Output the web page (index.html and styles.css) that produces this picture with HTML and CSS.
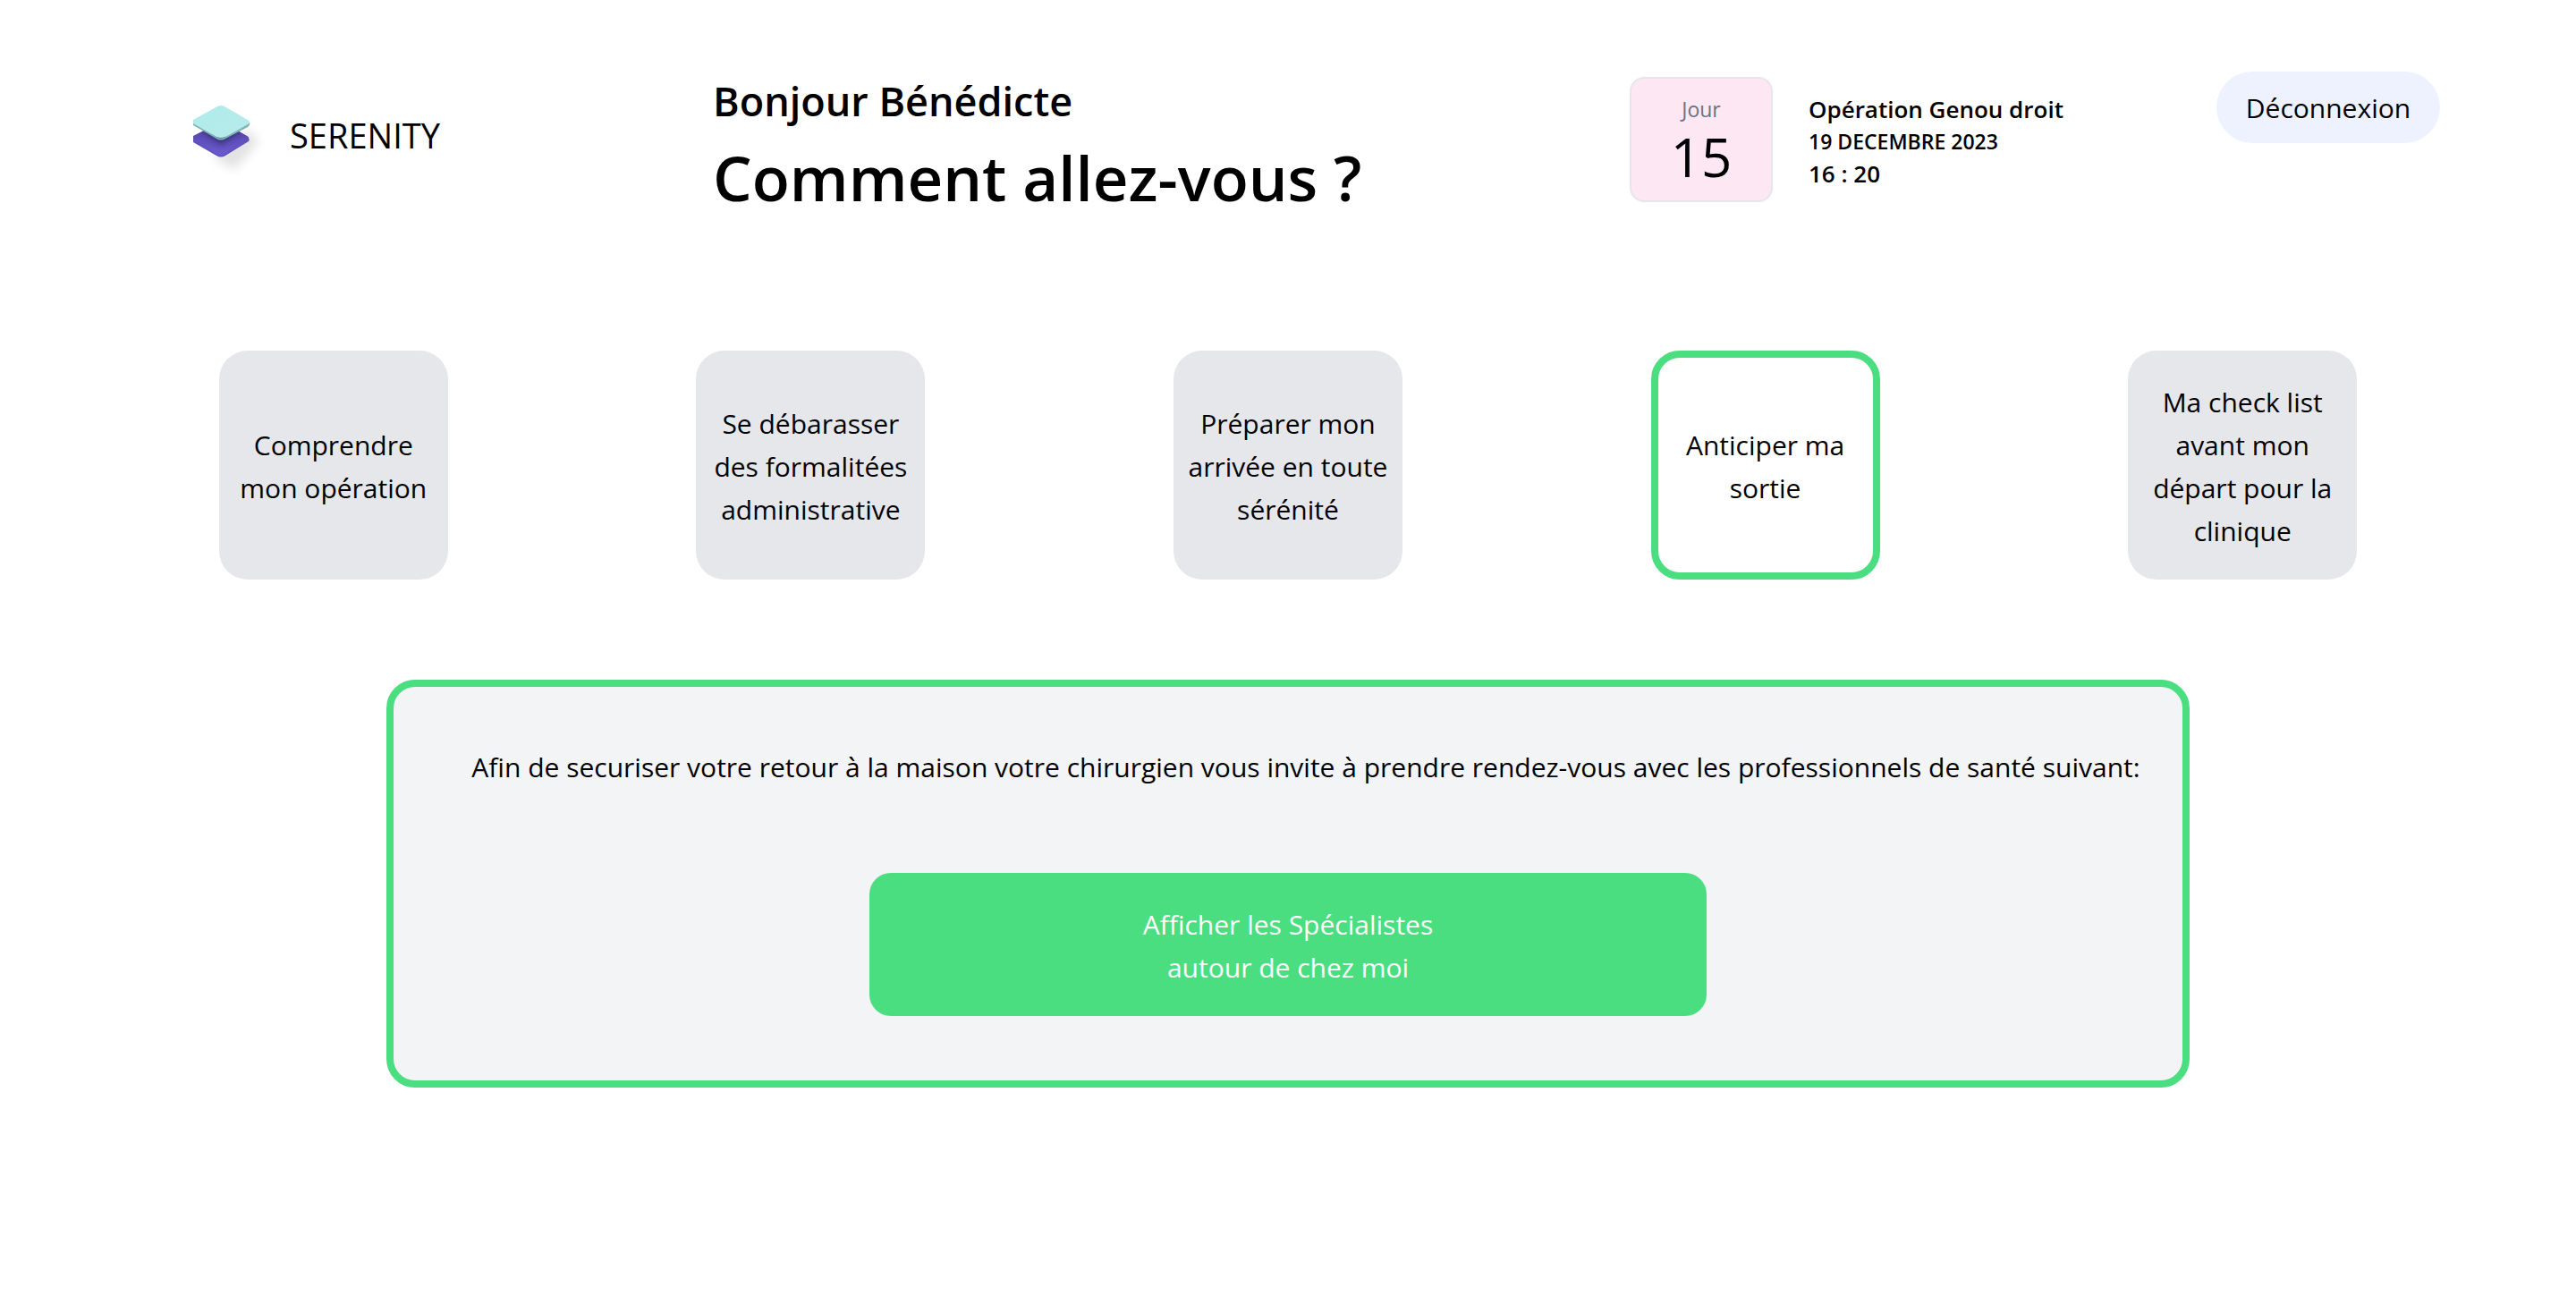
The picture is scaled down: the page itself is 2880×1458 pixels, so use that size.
FILE: index.html
```html
<!DOCTYPE html>
<html lang="fr">
<head>
  <meta charset="utf-8">
  <meta name="viewport" content="width=device-width, initial-scale=1">
  <title>Serenity</title>
  <link rel="stylesheet" href="styles.css">
</head>
<body>
  <header class="header">
    <a class="brand" href="#">
      <svg class="brand-logo" viewBox="0 0 76 84" aria-hidden="true">
        <defs>
          <linearGradient id="top" x1="0" y1="0" x2="1" y2="1">
            <stop offset="0" stop-color="#aeece9"/>
            <stop offset="1" stop-color="#b9eaec"/>
          </linearGradient>
          <linearGradient id="base" x1="0" y1="0" x2="0" y2="1">
            <stop offset="0" stop-color="#4f43a0"/>
            <stop offset="1" stop-color="#6c5ad0"/>
          </linearGradient>
          <filter id="soft" x="-50%" y="-50%" width="200%" height="200%">
            <feGaussianBlur stdDeviation="6"/>
          </filter>
          <filter id="shade" x="-50%" y="-50%" width="200%" height="200%">
            <feGaussianBlur stdDeviation="3"/>
          </filter>
          <clipPath id="slab">
            <path d="M0 36L31 18L60 34Q64 37 60 41L36 56Q31 59 26 56L0 42Z"/>
          </clipPath>
        </defs>
        <path d="M22 58L60 26L74 40L46 72Z" fill="#000" opacity=".11" filter="url(#soft)"/>
        <path d="M0 36L31 18L60 34Q64 37 62 40L36 56Q31 59 26 56L0 41Z" fill="#6150bd"/>
        <path d="M0 34L31 18L60 34Q64 36 60 39L36 54Q31 57 26 54L0 39Z" fill="url(#base)"/>
        <g clip-path="url(#slab)">
          <path d="M6 26L31 44L58 26L50 20L12 20Z" fill="#2c265e" opacity=".7" filter="url(#shade)"/>
        </g>
        <path d="M0 19L26 35Q31 38 36 35L62 17Q65 21 61 24L36 37Q31 40 26 37L0 22Z" fill="#7fb5b2"/>
        <path d="M0 16L27 1Q31-1 35 1L61 16Q65 19 61 21L36 35Q31 37 26 35L0 20Z" fill="url(#top)"/>
      </svg>
      <span class="brand-name">SERENITY</span>
    </a>
    <div class="greeting">
      <p class="greeting-hello">Bonjour Bénédicte</p>
      <h1 class="greeting-question">Comment allez-vous ?</h1>
    </div>
    <div class="appointment">
      <div class="day">
        <span class="day-label">Jour</span>
        <span class="day-number">15</span>
      </div>
      <div class="appointment-info">
        <p class="appointment-title">Opération Genou droit</p>
        <p class="appointment-date">19 DECEMBRE 2023</p>
        <p class="appointment-time">16 : 20</p>
      </div>
    </div>
    <button class="logout" type="button">Déconnexion</button>
  </header>

  <nav class="steps" aria-label="Étapes">
    <a class="step" href="#">Comprendre mon opération</a>
    <a class="step" href="#">Se débarasser des formalitées administrative</a>
    <a class="step" href="#">Préparer mon arrivée en toute sérénité</a>
    <a class="step step-active" href="#" aria-current="step">Anticiper ma sortie</a>
    <a class="step" href="#">Ma check list avant mon départ pour la clinique</a>
  </nav>

  <main class="panel">
    <p class="panel-text">Afin de securiser votre retour à la maison votre chirurgien vous invite à prendre rendez-vous avec les professionnels de santé suivant:</p>
    <button class="panel-button" type="button">Afficher les Spécialistes<br>autour de chez moi</button>
  </main>
</body>
</html>
```

FILE: styles.css
```css
* {
  box-sizing: border-box;
}

body {
  margin: 0;
  background: #fff;
  color: #000;
  font-family: "Segoe UI", "Open Sans", "Noto Sans", sans-serif;
  font-size: 30px;
  line-height: 48px;
}

p,
h1 {
  margin: 0;
}

a {
  color: inherit;
  text-decoration: none;
}

button {
  border: 0;
  font: inherit;
  cursor: pointer;
}

.header {
  display: grid;
  grid-template-columns: 581fr 1025fr 656fr auto;
  align-items: start;
  height: 248px;
  padding: 76px 152px 0 216px;
}

.brand {
  display: flex;
  align-items: flex-start;
  gap: 32px;
  padding-top: 42px;
}

.brand-logo {
  width: 76px;
  height: 84px;
  overflow: visible;
}

.brand-name {
  font-size: 38px;
  line-height: 66px;
}

.greeting {
  font-weight: 600;
}

.greeting-hello {
  font-size: 45px;
  line-height: 74px;
}

.greeting-question {
  font-size: 69px;
  font-weight: 600;
  line-height: 96px;
}

.appointment {
  display: flex;
  align-items: center;
  gap: 40px;
  padding-top: 10px;
}

.day {
  display: flex;
  flex-direction: column;
  align-items: center;
  width: 160px;
  height: 140px;
  padding-top: 18px;
  border: 2px solid #e5e7eb;
  border-radius: 16px;
  background: #fce7f3;
}

.day-label {
  color: #6b7280;
  font-size: 23px;
  line-height: 32px;
}

.day-number {
  font-size: 60px;
  line-height: 74px;
}

.appointment-info {
  padding-top: 4px;
  font-weight: 600;
}

.appointment-title,
.appointment-time {
  font-size: 26px;
  line-height: 40px;
}

.appointment-date {
  font-size: 23px;
  line-height: 32px;
}

.logout {
  min-width: 250px;
  margin-top: 4px;
  padding: 17px 32px 15px;
  border-radius: 40px;
  background: #eef2ff;
  color: #000;
}

.steps {
  display: grid;
  grid-template-columns: repeat(5, 1fr);
  justify-items: center;
  padding: 144px 106px 0;
}

.step {
  display: flex;
  align-items: center;
  justify-content: center;
  width: 256px;
  height: 256px;
  padding: 4px 16px 0;
  border-radius: 32px;
  background: #e5e7eb;
  text-align: center;
}

.step-active {
  border: 8px solid #4ade80;
  background: #fff;
}

.panel {
  display: flex;
  flex-direction: column;
  align-items: center;
  gap: 94px;
  width: 70%;
  margin: 112px auto 0;
  padding: 66px 0 72px;
  border: 8px solid #4ade80;
  border-radius: 32px;
  background: #f3f4f6;
}

.panel-text {
  padding: 0 32px 0 72px;
}

.panel-button {
  width: calc(50% - 64px);
  padding: 34px 32px 30px;
  border-radius: 24px;
  background: #4ade80;
  color: #fff;
}
```
